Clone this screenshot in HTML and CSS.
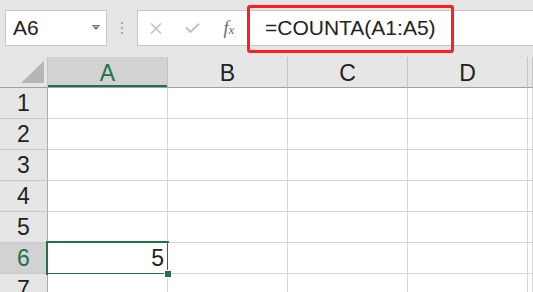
FILE: index.html
```html
<!DOCTYPE html>
<html lang="zh-CN">
<head>
    <meta charset="UTF-8">
    <meta name="viewport" content="width=device-width, initial-scale=1.0">
    <title>COUNTA</title>
    <link rel="stylesheet" href="styles.css">
</head>
<body>
    <div class="toolbar">
        <div class="name-box">
            <span class="name-text">A6</span>
            <svg class="drop" width="8" height="5" viewBox="0 0 8 5"><rect x="0" y="0" width="8" height="1" fill="#7a7a7a"/><path d="M0.5 1.5 L7.5 1.5 L4 5 Z" fill="#7a7a7a"/></svg>
        </div>
        <div class="grip"><i></i><i></i><i></i></div>
        <div class="formula-box">
            <span class="fb-btn">
                <svg width="12" height="11" viewBox="0 0 12 11"><path d="M1 0.5 L11 10.5 M11 0.5 L1 10.5" stroke="#c2c2c2" stroke-width="1.6" fill="none"/></svg>
            </span>
            <span class="fb-btn">
                <svg width="15" height="10" viewBox="0 0 15 10"><path d="M1 4.5 L5.5 9 L14 0.8" stroke="#c2c2c2" stroke-width="2" fill="none"/></svg>
            </span>
            <span class="fb-btn fx">f<span class="fx-sub">x</span></span>
            <div class="formula-text">=COUNTA(A1:A5)</div>
        </div>
        <div class="callout"></div>
    </div>

    <div class="sheet">
        <div class="corner"><div class="corner-tri"></div></div>
        <div class="col-head active">A</div>
        <div class="col-head">B</div>
        <div class="col-head">C</div>
        <div class="col-head">D</div>
        <div class="col-head"></div>

        <div class="row-head">1</div>
        <div class="cell"></div><div class="cell"></div><div class="cell"></div><div class="cell"></div><div class="cell"></div>
        <div class="row-head">2</div>
        <div class="cell"></div><div class="cell"></div><div class="cell"></div><div class="cell"></div><div class="cell"></div>
        <div class="row-head">3</div>
        <div class="cell"></div><div class="cell"></div><div class="cell"></div><div class="cell"></div><div class="cell"></div>
        <div class="row-head">4</div>
        <div class="cell"></div><div class="cell"></div><div class="cell"></div><div class="cell"></div><div class="cell"></div>
        <div class="row-head">5</div>
        <div class="cell"></div><div class="cell"></div><div class="cell"></div><div class="cell"></div><div class="cell"></div>
        <div class="row-head active">6</div>
        <div class="cell num selected">5<span class="fill-handle"></span></div><div class="cell"></div><div class="cell"></div><div class="cell"></div><div class="cell"></div>
        <div class="row-head">7</div>
        <div class="cell"></div><div class="cell"></div><div class="cell"></div><div class="cell"></div><div class="cell"></div>
    </div>
</body>
</html>
```

FILE: styles.css
```css
body {
    margin: 0;
    height: 292px;
    overflow: hidden;
    background-color: #e6e6e6;
    font-family: 'Liberation Sans', Arial, sans-serif;
    color: #222;
}
.toolbar {
    position: relative;
    display: flex;
    align-items: flex-start;
    height: 57px;
    padding: 10px 0 0 5px;
    box-sizing: border-box;
    overflow: hidden;
}
.name-box {
    display: flex;
    align-items: center;
    justify-content: space-between;
    width: 102px;
    height: 36px;
    box-sizing: border-box;
    padding: 0 6px 0 7px;
    background-color: #fff;
    border: 1px solid #c6c6c6;
}
.name-text {
    font-size: 21px;
    color: #222;
}
.drop {
    margin-top: -1px;
}
.grip {
    display: flex;
    flex-direction: column;
    align-items: center;
    gap: 3px;
    width: 30px;
    padding-top: 12px;
}
.grip i {
    display: block;
    width: 2px;
    height: 2px;
    background-color: #a8a8a8;
}
.formula-box {
    flex: 1;
    display: flex;
    align-items: center;
    height: 36px;
    margin-right: -4px;
    box-sizing: border-box;
    background-color: #fff;
    border: 1px solid #c6c6c6;
}
.fb-btn {
    display: flex;
    align-items: center;
    justify-content: center;
    width: 36px;
    height: 20px;
}
.fb-btn.fx {
    width: 38px;
    font-family: 'Liberation Serif', serif;
    font-style: italic;
    font-size: 18px;
    color: #666;
}
.fx-sub {
    font-size: 13px;
    margin-top: 4px;
}
.formula-text {
    margin-left: 17px;
    font-size: 21px;
    color: #222;
}
.callout {
    position: absolute;
    left: 247px;
    top: 5px;
    width: 207px;
    height: 48px;
    box-sizing: border-box;
    border: 3px solid #ff1f1f;
    border-radius: 3px;
}
.sheet {
    display: grid;
    grid-template-columns: 48px repeat(4, 120px) 1fr;
    grid-auto-rows: 31px;
}
.sheet > div {
    box-sizing: border-box;
}
.corner {
    display: flex;
    justify-content: flex-end;
    align-items: flex-end;
    padding: 0 3px 4px 0;
    border-right: 1px solid #c4c4c4;
    border-bottom: 1px solid #a0a0a0;
}
.corner-tri {
    width: 23px;
    height: 22px;
    background-color: #b6b6b6;
    clip-path: polygon(100% 0, 100% 100%, 0 100%);
}
.col-head {
    display: flex;
    align-items: center;
    justify-content: center;
    padding-top: 2px;
    font-size: 23px;
    background-color: #e6e6e6;
    border-right: 1px solid #c4c4c4;
    border-bottom: 1px solid #a0a0a0;
}
.col-head.active {
    background-color: #d2d2d2;
    color: #217346;
    box-shadow: inset 0 -2px 0 #217346;
}
.row-head {
    display: flex;
    align-items: center;
    justify-content: center;
    font-size: 23px;
    background-color: #e6e6e6;
    border-right: 1px solid #ababab;
    border-bottom: 1px solid #c8c8c8;
}
.row-head.active {
    background-color: #d2d2d2;
    color: #217346;
}
.cell {
    position: relative;
    background-color: #fff;
    border-right: 1px solid #d4d4d4;
    border-bottom: 1px solid #d4d4d4;
}
.cell.num {
    display: flex;
    align-items: center;
    justify-content: flex-end;
    padding-right: 3px;
    font-size: 23px;
}
.cell.selected::after {
    content: '';
    position: absolute;
    top: -2px;
    left: -2px;
    right: -2px;
    bottom: -2px;
    border: 2px solid #217346;
}
.fill-handle {
    position: absolute;
    left: 117px;
    top: 28px;
    width: 6px;
    height: 6px;
    background-color: #217346;
    box-shadow: 0 0 0 1px #fff;
    z-index: 1;
}
```
